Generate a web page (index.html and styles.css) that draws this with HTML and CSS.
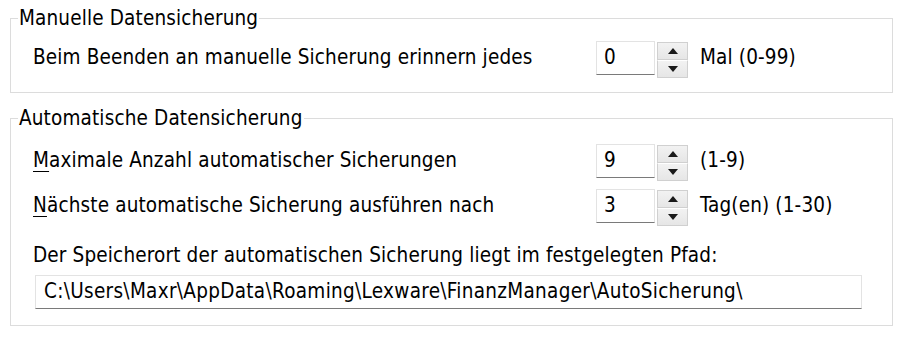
FILE: index.html
```html
<!DOCTYPE html>
<html lang="de">
<head>
<meta charset="utf-8">
<title>Datensicherung</title>
<link rel="stylesheet" href="styles.css">
</head>
<body>
<fieldset class="group group-manual">
  <legend>Manuelle Datensicherung</legend>
  <div class="row">
    <span class="label">Beim Beenden an manuelle Sicherung erinnern jedes</span>
    <div class="spin">
      <div class="spin-input">0</div>
      <div class="spin-btns">
        <div class="spin-btn"><span class="arrow up"></span></div>
        <div class="spin-btn"><span class="arrow down"></span></div>
      </div>
    </div>
    <span class="suffix">Mal (0-99)</span>
  </div>
</fieldset>

<fieldset class="group group-auto">
  <legend>Automatische Datensicherung</legend>
  <div class="row">
    <span class="label"><u>M</u>aximale Anzahl automatischer Sicherungen</span>
    <div class="spin">
      <div class="spin-input">9</div>
      <div class="spin-btns">
        <div class="spin-btn"><span class="arrow up"></span></div>
        <div class="spin-btn"><span class="arrow down"></span></div>
      </div>
    </div>
    <span class="suffix">(1-9)</span>
  </div>
  <div class="row row-second">
    <span class="label"><u>N</u>ächste automatische Sicherung ausführen nach</span>
    <div class="spin">
      <div class="spin-input">3</div>
      <div class="spin-btns">
        <div class="spin-btn"><span class="arrow up"></span></div>
        <div class="spin-btn"><span class="arrow down"></span></div>
      </div>
    </div>
    <span class="suffix">Tag(en) (1-30)</span>
  </div>
  <div class="path-label">Der Speicherort der automatischen Sicherung liegt im festgelegten Pfad:</div>
  <div class="path-box">C:\Users\Maxr\AppData\Roaming\Lexware\FinanzManager\AutoSicherung\</div>
</fieldset>
</body>
</html>
```

FILE: styles.css
```css
html, body {
  margin: 0;
  padding: 0;
  background: #ffffff;
}

body {
  font-family: "DejaVu Sans Condensed", "DejaVu Sans", sans-serif;
  font-size: 20.5px;
  letter-spacing: 0.15px;
  color: #000000;
  padding: 6px 0 0 10px;
}

.group {
  box-sizing: border-box;
  width: 883px;
  margin: 0;
  border: 1px solid #dcdcdc;
  padding: 11px 0 14px 22px;
}

.group legend {
  padding: 0 1px;
  margin-left: -15px;
  line-height: 24px;
  height: 24px;
}

.group-auto {
  margin-top: 13px;
  padding-top: 14px;
  padding-bottom: 16px;
}

.row {
  display: grid;
  grid-template-columns: 563px auto 1fr;
  align-items: start;
  height: 37px;
}

.row-second {
  margin-top: 8px;
}

.label {
  line-height: 32px;
}

.spin {
  display: flex;
  align-items: flex-start;
  height: 37px;
}

.spin-input {
  box-sizing: border-box;
  width: 59px;
  height: 34px;
  border: 1px solid #e3e3e3;
  border-bottom-color: #7a7a7a;
  padding-left: 7px;
  line-height: 31px;
  background: #fff;
}

.spin-btns {
  display: flex;
  flex-direction: column;
  margin-left: 2px;
  margin-top: 1px;
}

.spin-btn {
  box-sizing: border-box;
  width: 31px;
  height: 18px;
  background: linear-gradient(#f2f2f2, #e6e6e6);
  border: 1px solid #d0d0d0;
  display: flex;
  align-items: center;
  justify-content: center;
}

.spin-btn + .spin-btn {
  border-top: 1px solid #ffffff;
}

.arrow {
  width: 0;
  height: 0;
  border-left: 5px solid transparent;
  border-right: 5px solid transparent;
}

.arrow.up {
  border-bottom: 6px solid #1a1a1a;
}

.arrow.down {
  border-top: 6px solid #1a1a1a;
}

.suffix {
  margin-left: 12px;
  line-height: 32px;
}

u {
  text-decoration-thickness: 1px;
  text-underline-offset: 4px;
}

.path-label {
  margin-top: 17px;
  line-height: 24px;
}

.path-box {
  box-sizing: border-box;
  width: 827px;
  height: 34px;
  margin-top: 8px;
  margin-left: 2px;
  border: 1px solid #e3e3e3;
  border-bottom-color: #7a7a7a;
  padding-left: 8px;
  line-height: 31px;
  letter-spacing: 0.3px;
  background: #fff;
}
```
